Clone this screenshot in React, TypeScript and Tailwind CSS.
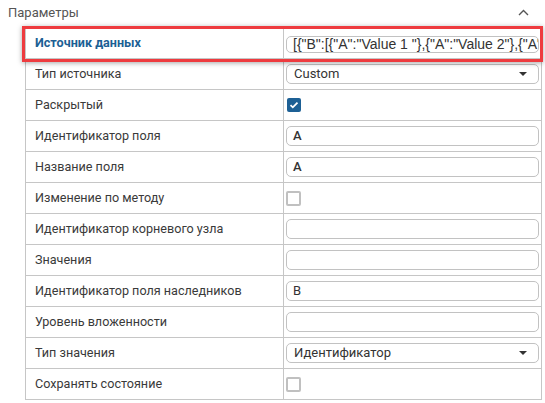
import React from "react";

const Input = ({ value = "", h = "h-[20px]", bold = false, size = "text-[13px]" }: { value?: string; h?: string; bold?: boolean; size?: string }) => (
  <div
    className={`${h} w-[253px] ml-[2px] border border-[#c2c2c2] rounded-[5px] flex items-center pl-[6px] overflow-hidden whitespace-nowrap ${size} text-[#333] ${bold ? "font-medium" : ""}`}
  >
    {value}
  </div>
);

const Select = ({ value }: { value: string }) => (
  <div className="h-[20px] w-[253px] ml-[2px] border border-[#c2c2c2] rounded-[5px] flex items-center justify-between pl-[7px] pr-[11px] text-[13px] text-[#333]">
    <span>{value}</span>
    <svg width="8" height="4" viewBox="0 0 8 4">
      <path d="M0 0 L8 0 L4 4 Z" fill="#333" />
    </svg>
  </div>
);

const CheckOn = () => (
  <div className="ml-[3px] w-[14px] h-[14px] rounded-[2px] bg-[#1d6095] flex items-center justify-center">
    <svg width="10" height="8" viewBox="0 0 10 8">
      <path d="M1.5 4.2 L3.8 6.3 L8.5 1.6" stroke="white" strokeWidth="1.8" fill="none" />
    </svg>
  </div>
);

const CheckOff = () => (
  <div className="ml-[2px] w-[15px] h-[15px] rounded-[2px] border-2 border-[#c0c0c0]" />
);

type Row = { label: string; el: React.ReactNode };

const rows: Row[] = [
  { label: "Тип источника", el: <Select value="Custom" /> },
  { label: "Раскрытый", el: <CheckOn /> },
  { label: "Идентификатор поля", el: <Input value="A" bold /> },
  { label: "Название поля", el: <Input value="A" bold /> },
  { label: "Изменение по методу", el: <CheckOff /> },
  { label: "Идентификатор корневого узла", el: <Input /> },
  { label: "Значения", el: <Input /> },
  { label: "Идентификатор поля наследников", el: <Input value="B" /> },
  { label: "Уровень вложенности", el: <Input /> },
  { label: "Тип значения", el: <Select value="Идентификатор" /> },
  { label: "Сохранять состояние", el: <CheckOff /> },
];

export default function App() {
  return (
    <div className="w-[545px] h-[403px] bg-white overflow-hidden font-['Roboto',sans-serif]">
      <div className="h-[28px] flex items-start justify-between pl-[8px] pr-[16px] pt-[3px]">
        <span className="text-[13px] text-[#555]">Параметры</span>
        <svg width="11" height="7" viewBox="0 0 11 7" className="mt-[6px]">
          <path d="M1 6 L5.5 1.5 L10 6" stroke="#555" strokeWidth="1.4" fill="none" />
        </svg>
      </div>
      <div className="ml-[25px] w-[517px] border-l border-r border-[#c6c6c6]">
        <div className="relative h-[31px] border-b border-[#c6c6c6] flex">
          <div className="w-[258px] border-r border-[#c6c6c6] flex items-center pl-[9px] text-[12.6px] font-bold text-[#1c5f94]">
            Источник данных
          </div>
          <div className="flex-1 flex items-center pt-[2px]">
            <Input value={'[{"B":[{"A":"Value 1 "},{"A":"Value 2"},{"A":"Value 3"}]}]'} h="h-[17px]" size="text-[14px] text-[#222] font-['Liberation_Sans',sans-serif]" />
          </div>
          <div className="absolute left-[-4px] right-[-2px] top-[-2px] bottom-[-4px] border-[3px] border-[#ee3b3f] shadow-[0_1px_5px_rgba(0,0,0,0.35)] pointer-events-none" />
        </div>
        {rows.map((r) => (
          <div key={r.label} className="h-[31px] border-b border-[#c6c6c6] flex">
            <div className="w-[258px] border-r border-[#c6c6c6] flex items-center pl-[9px] text-[12.6px] text-[#3a3a3a]">
              {r.label}
            </div>
            <div className="flex-1 flex items-center">{r.el}</div>
          </div>
        ))}
      </div>
    </div>
  );
}
